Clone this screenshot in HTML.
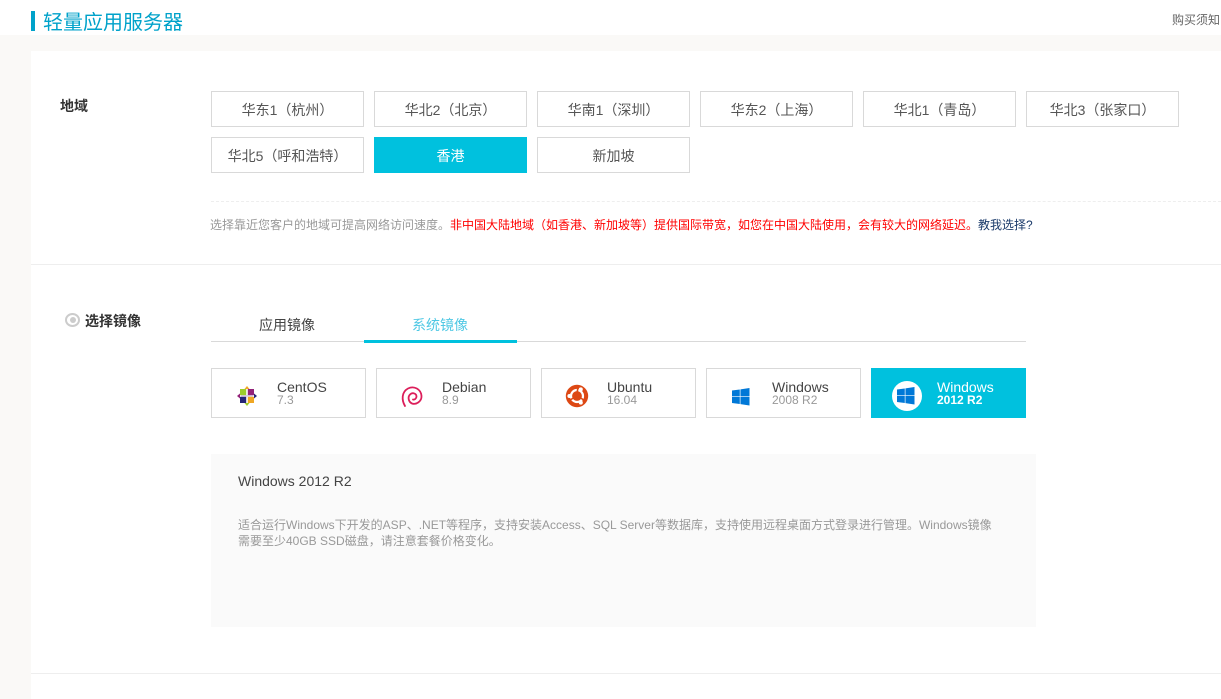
<!DOCTYPE html>
<html><head><meta charset="utf-8"><style>
html,body{margin:0;padding:0}
body{width:1221px;height:699px;overflow:hidden;position:relative;background:#fff;font-family:"Liberation Sans","Noto Sans CJK SC",sans-serif;font-size:13px;color:#333}
div,span,svg{position:absolute;box-sizing:border-box}
span.i{position:static}
.b{width:153px;height:36px;border:1px solid #d9d9d9;background:#fff;text-align:center;line-height:37px;font-size:14px;color:#555}
.on{background:#00c1de;border-color:#00c1de;color:#fff}
.c{top:368px;width:155px;height:50px;border:1px solid #d9d9d9;background:#fff}
.n{left:65px;top:11px;font-size:14px;line-height:15px;color:#444;white-space:nowrap}
.v{left:65px;top:24px;font-size:12px;line-height:14px;color:#999;white-space:nowrap}
.t{white-space:nowrap}
</style></head><body>
<div style="left:0;top:35px;width:1221px;height:664px;background:#faf9f7"></div>
<div style="left:31px;top:51px;width:1190px;height:648px;background:#fff"></div>
<div style="left:31px;top:11px;width:4px;height:20px;background:#00a2ca"></div>
<div class="t" style="left:43px;top:11px;font-size:20px;line-height:24px;color:#00a2ca">轻量应用服务器</div>
<div class="t" style="left:1172px;top:12px;font-size:12px;line-height:16px;color:#666;width:49px;overflow:hidden">购买须知</div>

<div class="t" style="left:60px;top:98px;font-size:14px;line-height:17px;font-weight:bold;color:#333">地域</div>
<div class="b" style="left:211px;top:91px">华东1（杭州）</div>
<div class="b" style="left:374px;top:91px">华北2（北京）</div>
<div class="b" style="left:537px;top:91px">华南1（深圳）</div>
<div class="b" style="left:700px;top:91px">华东2（上海）</div>
<div class="b" style="left:863px;top:91px">华北1（青岛）</div>
<div class="b" style="left:1026px;top:91px">华北3（张家口）</div>
<div class="b" style="left:211px;top:137px">华北5（呼和浩特）</div>
<div class="b on" style="left:374px;top:137px">香港</div>
<div class="b" style="left:537px;top:137px">新加坡</div>

<div style="left:211px;top:201px;width:1010px;height:0;border-top:1px dashed #eee"></div>
<div class="t" style="left:210px;top:217px;font-size:12px;line-height:16px;color:#999">选择靠近您客户的地域可提高网络访问速度。<span class="i" style="color:#f00">非中国大陆地域（如香港、新加坡等）提供国际带宽，如您在中国大陆使用，会有较大的网络延迟。</span><span class="i" style="color:#1a3a6a">教我选择?</span></div>
<div style="left:31px;top:264px;width:1190px;height:1px;background:#eee"></div>

<div style="left:65px;top:313px;width:15px;height:14px;border-radius:50%;border:2px solid #ccc;background:#fff"></div>
<div style="left:69.5px;top:317px;width:6px;height:6px;border-radius:50%;background:#ccc"></div>
<div class="t" style="left:85px;top:313px;font-size:14px;line-height:17px;font-weight:bold;color:#333">选择镜像</div>

<div class="t" style="left:259px;top:317px;font-size:14px;line-height:17px;color:#444">应用镜像</div>
<div class="t" style="left:412px;top:317px;font-size:14px;line-height:17px;color:#4fc8e4">系统镜像</div>
<div style="left:211px;top:341px;width:815px;height:1px;background:#d9d9d9"></div>
<div style="left:364px;top:340px;width:153px;height:3px;background:#00c1de"></div>

<div class="c" style="left:211px">
<svg style="left:24px;top:16px" width="22" height="22" viewBox="0 0 22 22">
<path d="M1 11 4 8.5V13.5Z" fill="#932279"/><path d="M21 11 18 8.5V13.5Z" fill="#262577"/>
<path d="M11 1 8.5 4H13.5Z" fill="#efa724"/><path d="M11 21 8.5 18H13.5Z" fill="#9ccd2a"/>
<rect x="4" y="4" width="6.2" height="6.2" fill="#9ccd2a"/><rect x="11.8" y="4" width="6.2" height="6.2" fill="#932279"/>
<rect x="4" y="11.8" width="6.2" height="6.2" fill="#262577"/><rect x="11.8" y="11.8" width="6.2" height="6.2" fill="#efa724"/>
<path d="M5 10.9h12" stroke="#c9b9d6" stroke-width="1.2"/>
</svg>
<div class="n">CentOS</div><div class="v">7.3</div></div>

<div class="c" style="left:376px">
<svg style="left:23px;top:14px" width="26" height="26" viewBox="0 0 26 26" fill="none">
<path d="M5 23C1.5 17 1.5 9 8 5.5 14 2.5 21 6 21.5 13 21.8 18.5 16 22 12 20.5 8.5 19 7.5 14 10 11.5 12.5 9 16.5 10.5 16.5 13.5 16.5 15.5 14.5 17 13 16.5" stroke="#dc1e5a" stroke-width="1.8" stroke-linecap="round"/>
</svg>
<div class="n">Debian</div><div class="v">8.9</div></div>

<div class="c" style="left:541px">
<svg style="left:23px;top:15px" width="24" height="24" viewBox="0 0 24 24">
<circle cx="12" cy="12" r="11.2" fill="#dd4814"/>
<circle cx="12" cy="12" r="6" fill="none" stroke="#fff" stroke-width="2.2"/>
<path d="M12 12 8.3 5.6M12 12 8.3 18.4M12 12H19.4" stroke="#dd4814" stroke-width="0"/>
<path d="M13 3.5 12.2 8M4.5 16.5 8.3 14M19.5 16.5 15.7 14" stroke="#dd4814" stroke-width="1.6"/>
<circle cx="4.4" cy="12" r="2" fill="#fff"/><circle cx="15.8" cy="5.4" r="2" fill="#fff"/><circle cx="15.8" cy="18.6" r="2" fill="#fff"/>
</svg>
<div class="n">Ubuntu</div><div class="v">16.04</div></div>

<div class="c" style="left:706px">
<svg style="left:25px;top:19px" width="17.5" height="17.5" viewBox="0 0 18 18" fill="#0078d7">
<path d="M0 2.6 8 1.5V8.6H0ZM8.7 1.4 18 0V8.6H8.7ZM0 9.3H8V16.5L0 15.4ZM8.7 9.3H18V18L8.7 16.6Z"/>
</svg>
<div class="n">Windows</div><div class="v">2008 R2</div></div>

<div class="c" style="left:871px;background:#00c1de;border-color:#00c1de">
<div style="left:20px;top:12px;width:30px;height:30px;border-radius:50%;background:#fff"></div>
<svg style="left:25px;top:18px" width="17.5" height="17.5" viewBox="0 0 18 18" fill="#0078d7">
<path d="M0 2.6 8 1.5V8.6H0ZM8.7 1.4 18 0V8.6H8.7ZM0 9.3H8V16.5L0 15.4ZM8.7 9.3H18V18L8.7 16.6Z"/>
</svg>
<div class="n" style="color:#fff">Windows</div><div class="v" style="color:#fff;font-weight:bold">2012 R2</div></div>

<div style="left:211px;top:454px;width:825px;height:173px;background:#fafafa"></div>
<div class="t" style="left:238px;top:473px;font-size:14px;line-height:16px;color:#444">Windows 2012 R2</div>
<div style="left:238px;top:518px;width:770px;font-size:12px;line-height:15.5px;color:#999">适合运行Windows下开发的ASP、.NET等程序，支持安装Access、SQL Server等数据库，支持使用远程桌面方式登录进行管理。Windows镜像<br>需要至少40GB SSD磁盘，请注意套餐价格变化。</div>

<div style="left:31px;top:673px;width:1190px;height:1px;background:#eee"></div>
</body></html>
